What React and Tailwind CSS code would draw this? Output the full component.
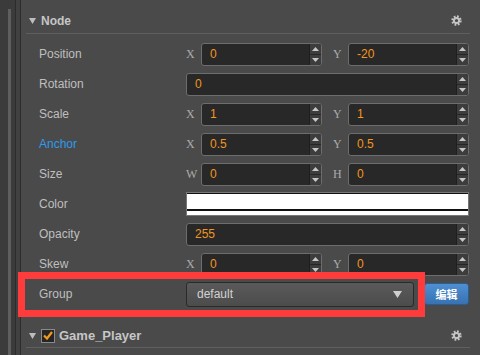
const sans = { fontFamily: '"Liberation Sans", Arial, sans-serif' };
const serif = { fontFamily: '"Liberation Serif", "Times New Roman", serif' };

function Tri({ color = "#bdbdbd" }) {
  return (
    <svg width="7" height="6" viewBox="0 0 7 6">
      <polygon points="0,0 7,0 3.5,6" fill={color} />
    </svg>
  );
}

function Gear() {
  return (
    <svg width="11" height="11" viewBox="0 0 11 11">
      <circle cx="5.5" cy="5.5" r="2.6" fill="none" stroke="#c4c4c4" strokeWidth="2" />
      <circle cx="5.5" cy="5.5" r="4" fill="none" stroke="#c4c4c4" strokeWidth="2.4" strokeDasharray="1.7 1.44" />
    </svg>
  );
}

function Spin() {
  return (
    <div className="flex w-[12px] flex-col border-l border-[#1f1f1f] bg-[#3d3d3d]">
      <div className="flex flex-1 items-center justify-center border-b border-[#262626]">
        <svg width="7" height="4" viewBox="0 0 7 4">
          <polygon points="0,4 3.5,0 7,4" fill="#c6c6c6" />
        </svg>
      </div>
      <div className="flex flex-1 items-center justify-center">
        <svg width="7" height="4" viewBox="0 0 7 4">
          <polygon points="0,0 7,0 3.5,4" fill="#c6c6c6" />
        </svg>
      </div>
    </div>
  );
}

function Num({ value, className = "" }) {
  return (
    <div className={"flex h-[23px] overflow-hidden rounded-[3px] border border-[#6d6d6d] bg-[#282828] " + className}>
      <span className="flex-1 pl-[8px] text-[12px] leading-[21px] text-[#f3951f]" style={sans}>
        {value}
      </span>
      <Spin />
    </div>
  );
}

function Row({ label, blue, children }) {
  return (
    <div className="flex h-[30px] items-center">
      <div
        className={"w-[160px] pl-[13px] text-[12px] " + (blue ? "text-[#2f9bea]" : "text-[#bfbfbf]")}
        style={sans}
      >
        {label}
      </div>
      <div className="w-[283px]">{children}</div>
    </div>
  );
}

function Pair({ a, b, va, vb }) {
  return (
    <div className="flex items-center">
      <span className="w-[15px] text-[12px] text-[#acacac]" style={serif}>{a}</span>
      <Num value={va} className="w-[121px]" />
      <span className="w-[26px] pl-[11px] text-[12px] text-[#acacac]" style={serif}>{b}</span>
      <Num value={vb} className="w-[121px]" />
    </div>
  );
}

export default function App() {
  return (
    <div className="relative flex h-[355px] w-[480px] overflow-hidden bg-[#4a4a4a]" style={sans}>
      {/* left strip */}
      <div className="flex h-full w-[21px] shrink-0">
        <div className="w-[15px] bg-[#3b3b3b]">
          <div className="ml-[8px] mt-[9px] h-[346px] w-[3px] bg-[#5e5e5e]" />
        </div>
        <div className="w-[1px] bg-[#2c2c2c]" />
        <div className="w-[4px] bg-[#414141]" />
        <div className="w-[1px] bg-[#2c2c2c]" />
      </div>

      <div className="ml-[5px] w-[444px]">
        {/* Node header */}
        <div className="flex h-[34px] items-center border-b border-[#5f5f5f] pl-[3px] pr-[8px] pt-[8px]">
          <Tri />
          <span className="ml-[5px] flex-1 text-[12px] font-bold text-[#c6c6c6]">Node</span>
          <Gear />
        </div>

        <div className="pt-[5px]">
          <Row label="Position">
            <Pair a="X" b="Y" va="0" vb="-20" />
          </Row>
          <Row label="Rotation">
            <Num value="0" />
          </Row>
          <Row label="Scale">
            <Pair a="X" b="Y" va="1" vb="1" />
          </Row>
          <Row label="Anchor" blue>
            <Pair a="X" b="Y" va="0.5" vb="0.5" />
          </Row>
          <Row label="Size">
            <Pair a="W" b="H" va="0" vb="0" />
          </Row>
          <Row label="Color">
            <div className="h-[24px] border border-[#777777] bg-white">
              <div className="flex h-full flex-col border-t border-[#111]">
                <div className="h-[15px] bg-white" />
                <div className="h-[2px] bg-[#111]" />
                <div className="flex-1 bg-white" />
              </div>
            </div>
          </Row>
          <Row label="Opacity">
            <Num value="255" />
          </Row>
          <Row label="Skew">
            <Pair a="X" b="Y" va="0" vb="0" />
          </Row>
          <Row label="Group">
            <div className="flex items-center">
              <div className="flex h-[25px] w-[228px] items-center rounded-[3px] border border-[#2a2a2a] bg-gradient-to-b from-[#5a5a5a] to-[#4c4c4c] pl-[10px] pr-[11px]">
                <span className="flex-1 text-[12px] text-[#d2d2d2]">default</span>
                <svg width="9" height="7" viewBox="0 0 9 7">
                  <polygon points="0,0 9,0 4.5,7" fill="#cfcfcf" />
                </svg>
              </div>
              <div
                className="ml-[10px] flex h-[22px] w-[45px] items-center justify-center rounded-[3px] border border-[#2b5d94] bg-gradient-to-b from-[#4e8fd2] to-[#3872b2] text-[11px] font-bold text-white"
                style={{ fontFamily: '"Noto Sans CJK SC", sans-serif' }}
              >
                编辑
              </div>
            </div>
          </Row>
        </div>

        {/* Game_Player header */}
        <div className="flex h-[39px] items-center border-b border-[#5f5f5f] pl-[3px] pr-[8px] pt-[15px]">
          <Tri />
          <div className="ml-[5px] flex h-[14px] w-[14px] items-center justify-center border border-[#8a8a8a] bg-[#262626]">
            <svg width="10" height="9" viewBox="0 0 10 9">
              <polyline points="1,4.5 4,7.5 9,1" fill="none" stroke="#f39a1e" strokeWidth="2.2" />
            </svg>
          </div>
          <span className="ml-[4px] flex-1 text-[13px] font-bold text-[#c6c6c6]">Game_Player</span>
          <Gear />
        </div>
      </div>

      {/* red annotation */}
      <div className="absolute left-[18px] top-[272px] h-[45px] w-[407px] border-[7px] border-[#ff3b3b]" />
    </div>
  );
}
